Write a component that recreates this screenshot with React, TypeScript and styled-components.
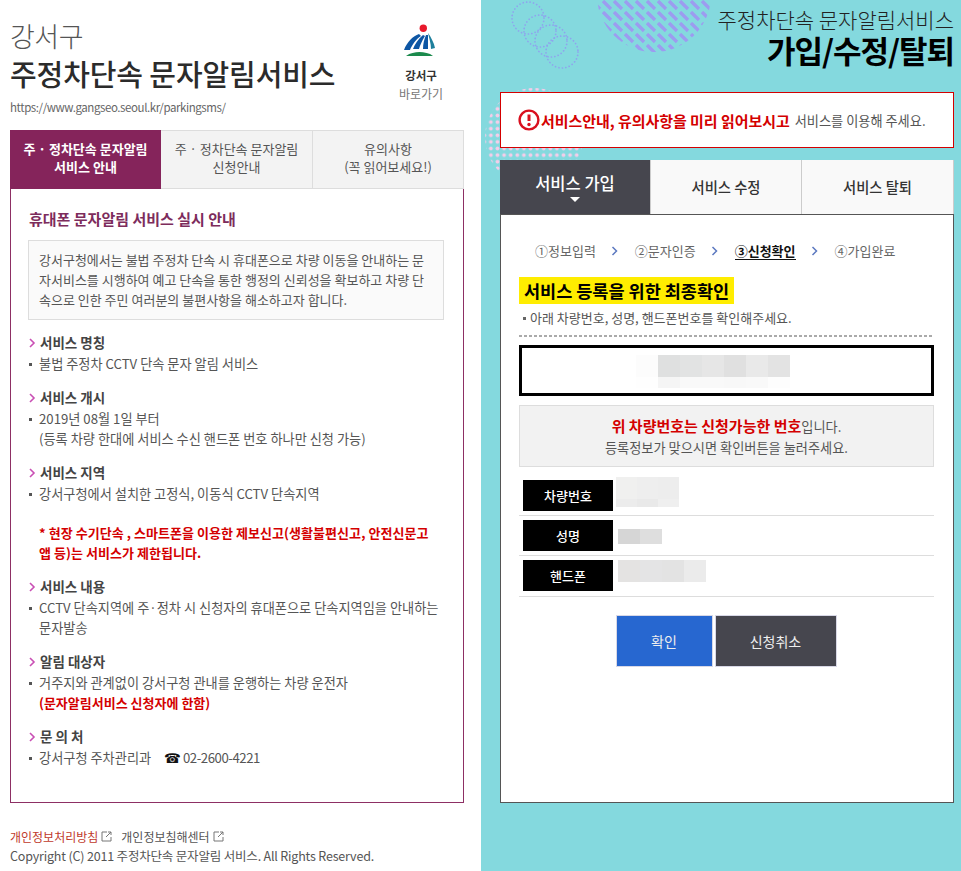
import React from 'react';
import styled, { createGlobalStyle } from 'styled-components';

const GlobalStyle = createGlobalStyle`
	html, body { margin: 0; padding: 0; background: #fff; }
	body { font-family: "Noto Sans CJK KR", "Noto Sans", sans-serif; color: #555; }
	* { box-sizing: border-box; }
`;

const Page = styled.div`
	display: grid;
	grid-template-columns: 481px 480px;
	width: 961px;
	height: 871px;
	overflow: hidden;
`;

/* left column */
const InfoColumn = styled.div`
	padding: 19px 17px 0 10px;
`;

const Header = styled.header`
	display: flex;
	justify-content: space-between;
	height: 111px;
`;

const TitleBlock = styled.div`
	display: flex;
	flex-direction: column;
`;

const District = styled.div`
	font-size: 27px;
	font-weight: 300;
	line-height: 34px;
	color: #555;
	letter-spacing: -0.5px;
`;

const MainTitle = styled.h1`
	margin: 2px 0 0;
	font-size: 29px;
	font-weight: 500;
	line-height: 36px;
	color: #2b2b2b;
	letter-spacing: -0.1px;
`;

const SiteUrl = styled.div`
	margin-top: 7px;
	font-size: 11.5px;
	line-height: 18px;
	color: #666;
	letter-spacing: -0.42px;
`;

const LogoBlock = styled.div`
	display: flex;
	flex-direction: column;
	align-items: center;
	width: 60px;
	margin: 1px 13px 0 0;
	font-size: 12px;
	line-height: 19px;
	color: #777;
`;

const LogoName = styled.strong`
	margin-top: 9px;
	line-height: 17px;
	color: #333;
	font-weight: 700;
	font-size: 11.5px;
`;

const InfoTabs = styled.div`
	display: grid;
	grid-template-columns: 151px 152px 151px;
	height: 59px;
`;

const InfoTab = styled.div<{ $active?: boolean }>`
	display: flex;
	flex-direction: column;
	align-items: center;
	justify-content: center;
	font-size: 13px;
	line-height: 18px;
	padding-bottom: 4px;
	font-weight: ${p => (p.$active ? 700 : 400)};
	color: ${p => (p.$active ? '#fff' : '#555')};
	background: ${p => (p.$active ? '#85245b' : '#f3f3f3')};
	border: 1px solid ${p => (p.$active ? '#85245b' : '#ddd')};
	border-left-width: ${p => (p.$active ? 1 : 0)}px;
`;

const InfoPanel = styled.div`
	height: 614px;
	padding: 19px 19px 0 17px;
	border: 1px solid #8d2f64;
	border-top: 0;
`;

const PanelTitle = styled.h2`
	margin: 0 0 0 1px;
	font-size: 15px;
	font-weight: 700;
	line-height: 22px;
	color: #7d2c5c;
`;

const IntroBox = styled.div`
	margin: 10px 0 12px;
	padding: 9px 10px 9px;
	height: 80px;
	font-size: 13px;
	line-height: 20px;
	color: #555;
	background: #fafafa;
	border: 1px solid #ddd;
`;

const Section = styled.section`
	margin-bottom: 13px;
`;

const SectionHead = styled.h3`
	display: flex;
	align-items: center;
	gap: 4px;
	margin: 0 0 1px;
	font-size: 13.5px;
	font-weight: 700;
	line-height: 21px;
	color: #444;
`;

const BodyText = styled.div`
	position: relative;
	padding-left: 11px;
	font-size: 13.2px;
	line-height: 20px;
	color: #555;
	&::before {
		content: '';
		position: absolute;
		left: 1px;
		top: 9px;
		width: 3px;
		height: 3px;
		background: #555;
	}
`;

const Warning = styled.div`
	margin: 19px 0 0 11px;
	font-size: 13px;
	line-height: 20px;
	font-weight: 700;
	color: #d40000;
	letter-spacing: 0.05px;
`;

const RedStrong = styled.strong`
	font-size: 13px;
	font-weight: 700;
	color: #d40000;
`;

const PhoneGlyph = styled.span`
	margin: 0 2px 0 10px;
	font-family: "DejaVu Sans", sans-serif;
	font-size: 13.5px;
	color: #111;
`;

const PhoneNumber = styled.span`
	letter-spacing: -0.45px;
`;

const Footer = styled.footer`
	margin-top: 24px;
	font-size: 12px;
	line-height: 19px;
	color: #555;
`;

const FooterLinks = styled.div`
	display: flex;
	align-items: center;
	gap: 3px;
`;

const PolicyLink = styled.span<{ $red?: boolean }>`
	color: ${p => (p.$red ? '#c0392b' : '#555')};
	margin-left: ${p => (p.$red ? 0 : 6)}px;
`;

const Copyright = styled.div`
	font-size: 12.5px;
	letter-spacing: -0.18px;
`;

/* right column */
const FormColumn = styled.div`
	position: relative;
	padding: 6px 7px 0 19px;
	background: #84d9de;
	overflow: hidden;
`;

const Decoration = styled.svg`
	position: absolute;
	left: 0;
	top: 0;
`;

const FormHeader = styled.header`
	position: relative;
	height: 86px;
	text-align: right;
`;

const FormSub = styled.div`
	font-size: 21px;
	font-weight: 300;
	line-height: 26px;
	color: #222;
`;

const FormTitle = styled.div`
	margin-top: 1px;
	font-size: 31px;
	font-weight: 700;
	line-height: 34px;
	color: #000;
	letter-spacing: -1px;
`;

const Notice = styled.div`
	position: relative;
	display: flex;
	align-items: center;
	gap: 1px;
	height: 56px;
	padding: 0 0 0 17px;
	background: #fff;
	border: 1px solid #d40000;
	font-size: 13.2px;
	color: #555;
`;

const NoticeStrong = styled.strong`
	margin-right: 4px;
	font-size: 15px;
	font-weight: 700;
	color: #d40000;
	letter-spacing: -0.05px;
`;

const FormTabs = styled.div`
	position: relative;
	display: grid;
	grid-template-columns: 151px 151px 152px;
	height: 54px;
	margin-top: 12px;
`;

const FormTab = styled.div<{ $active?: boolean }>`
	position: relative;
	display: flex;
	align-items: center;
	justify-content: center;
	font-size: ${p => (p.$active ? 16.5 : 14.3)}px;
	font-weight: 500;
	color: ${p => (p.$active ? '#fff' : '#333')};
	background: ${p => (p.$active ? '#46464e' : '#f9f9f9')};
	border-right: 1px solid #ccc;
	padding-bottom: ${p => (p.$active ? 8 : 1)}px;
	${p =>
		p.$active &&
		`&::after {
			content: '';
			position: absolute;
			left: 70px;
			bottom: 12px;
			border: 5px solid transparent;
			border-top-color: #fff;
			border-bottom-width: 0;
		}`}
`;

const FormPanel = styled.div`
	position: relative;
	height: 589px;
	padding: 27px 19px 0 18px;
	background: #fff;
	border: 1px solid #555;
`;

const Steps = styled.div`
	display: flex;
	align-items: center;
	height: 18px;
	padding-left: 16px;
	font-size: 13px;
	color: #666;
`;

const Step = styled.span<{ $current?: boolean }>`
	font-weight: ${p => (p.$current ? 700 : 400)};
	color: ${p => (p.$current ? '#111' : '#666')};
	line-height: 16px;
	border-bottom: ${p => (p.$current ? '1px solid #111' : '1px solid transparent')};
`;

const StepArrow = styled.svg`
	margin: 0 17px 0 15px;
`;

const Highlight = styled.h2`
	display: inline-block;
	margin: 17px 0 0;
	padding: 0 5px;
	height: 27px;
	font-size: 17.5px;
	font-weight: 700;
	line-height: 27px;
	color: #000;
	background: #ffed00;
`;

const Hint = styled.div`
	display: flex;
	align-items: flex-start;
	height: 33px;
	padding: 5px 0 0 4px;
	font-size: 13px;
	line-height: 18px;
	color: #555;
	background: repeating-linear-gradient(90deg, #aaa 0 3px, transparent 3px 5px) left bottom / 100% 2px no-repeat;
	&::before {
		content: '';
		flex: none;
		width: 3px;
		height: 3px;
		margin: 8px 4px 0 0;
		background: #666;
	}
`;

const PlateBox = styled.div`
	display: flex;
	justify-content: center;
	height: 51px;
	margin-top: 8px;
	padding: 7px 27px 0 0;
	background: #fff;
	border: 3px solid #000;
`;

const StatusBox = styled.div`
	height: 62px;
	margin-top: 9px;
	padding-top: 9px;
	text-align: center;
	font-size: 13.2px;
	line-height: 21px;
	color: #555;
	background: #f2f2f2;
	border: 1px solid #ddd;
`;

const StatusStrong = styled.strong`
	font-size: 15px;
	font-weight: 700;
	color: #d40000;
`;

const DataRows = styled.div`
	margin-top: 9px;
`;

const DataRow = styled.div<{ $h: number }>`
	display: flex;
	align-items: flex-start;
	height: ${p => p.$h}px;
	padding: 4px 0 0 4px;
	border-bottom: 1px solid #ddd;
`;

const RowLabel = styled.div`
	display: flex;
	align-items: center;
	justify-content: center;
	width: 90px;
	height: 31px;
	flex: none;
	background: #000;
	color: #fff;
	font-size: 13px;
	font-weight: 500;
`;

const Mosaic = styled.svg<{ $top: number; $left: number }>`
	display: block;
	margin: ${p => p.$top}px 0 0 ${p => p.$left}px;
	flex: none;
`;

const Buttons = styled.div`
	display: flex;
	justify-content: center;
	gap: 2px;
	margin-top: 18px;
	padding-right: 1px;
`;

const ActionButton = styled.button<{ $w: number; $bg: string }>`
	width: ${p => p.$w}px;
	height: 52px;
	padding: 0;
	font-family: inherit;
	font-size: 14px;
	color: #eee;
	background: ${p => p.$bg};
	border: 1px solid #d8d8e6;
`;

const Chevron = ({ color = '#c94fb4', size = 8 }: { color?: string; size?: number }) => (
	<svg width={size} height={size + 2} viewBox="0 0 8 10" fill="none">
		<path d="M2 1l4 4-4 4" stroke={color} strokeWidth="1.6" />
	</svg>
);

const ExternalIcon = () => (
	<svg width="11" height="11" viewBox="0 0 11 11" fill="none">
		<path d="M6 1H1v9h9V6" stroke="#777" strokeWidth="1" />
		<path d="M5 6l5-5M7 1h3v3" stroke="#777" strokeWidth="1" />
	</svg>
);

const Logo = () => (
	<svg width="44" height="38" viewBox="0 0 44 38">
		<circle cx="24.3" cy="8.3" r="3.7" fill="#e8192c" />
		<path d="M5 30C8 22 14 16 20 14l2 2C17 19 13 25 11 30z" fill="#0d56a4" />
		<path d="M14 29c2-5 5-10 10-14l2 1c-3 5-5 9-6 13z" fill="#0d56a4" />
		<path d="M24 29c0-5 1-9 3-14h2c0 5 0 10 0 14z" fill="#0d56a4" />
		<path d="M32 29c0-6-2-11-3-16 3 4 6 10 7 15z" fill="#1e7f9c" />
		<path d="M7 36c4-3 9-4 13.500-4s10 1 13.500 4z" fill="#1b8a4c" />
	</svg>
);

const AlertIcon = () => (
	<svg width="22" height="22" viewBox="0 0 22 22" fill="none">
		<circle cx="11" cy="11" r="9.4" stroke="#d9101f" strokeWidth="2.4" />
		<path d="M11 5.500v6.500" stroke="#d9101f" strokeWidth="3" />
		<circle cx="11" cy="15.500" r="1.700" fill="#d9101f" />
	</svg>
);

const StepChevron = () => (
	<StepArrow width="7" height="10" viewBox="0 0 7 10" fill="none">
		<path d="M1.500 1l4 4-4 4" stroke="#5b78c0" strokeWidth="1.500" />
	</StepArrow>
);

type MosaicProps = { rows: string[][]; cell: number; cellH: number[]; top?: number; left?: number };

// pixelated privacy blur: one row of greys per line
const MosaicCells = ({ rows, cell, cellH, top = 0, left = 0 }: MosaicProps) => {
	let y = 0;
	const width = Math.max(...rows.map(r => r.length)) * cell;
	const height = cellH.reduce((a, b) => a + b, 0);
	return (
		<Mosaic width={width} height={height} $top={top} $left={left}>
			{rows.map((row, i) => {
				const rowY = y;
				y += cellH[i];
				return row.map((fill, j) => (
					<rect key={`${i}-${j}`} x={j * cell} y={rowY} width={cell} height={cellH[i]} fill={fill} />
				));
			})}
		</Mosaic>
	);
};

const Backdrop = () => (
	<Decoration width="480" height="180" viewBox="0 0 480 180" fill="none">
		<defs>
			<pattern id="stripeTile" width="11" height="11" patternUnits="userSpaceOnUse">
				<path d="M1 1L9 9" stroke="#9c9cf0" strokeWidth="3.400" />
			</pattern>
			<pattern id="pinkDots" width="6.600" height="6.600" patternUnits="userSpaceOnUse">
				<circle cx="3.300" cy="3.300" r="1.900" fill="#f5cde9" />
			</pattern>
		</defs>
		<g stroke="#8fa3ee" strokeWidth="1.700" strokeDasharray="0.1 3.400" strokeLinecap="round">
			<circle cx="47" cy="18" r="16" />
			<circle cx="59" cy="31" r="16" />
			<circle cx="70" cy="41" r="16" />
			<circle cx="81" cy="52" r="16" />
		</g>
		<circle cx="173" cy="-5" r="57" fill="url(#stripeTile)" />
		<circle cx="53" cy="137" r="49" fill="url(#pinkDots)" />
	</Decoration>
);

export default function App() {
	return (
		<>
			<GlobalStyle />
			<Page>
				<InfoColumn>
					<Header>
						<TitleBlock>
							<District>강서구</District>
							<MainTitle>주정차단속 문자알림서비스</MainTitle>
							<SiteUrl>https://www.gangseo.seoul.kr/parkingsms/</SiteUrl>
						</TitleBlock>
						<LogoBlock>
							<Logo />
							<LogoName>강서구</LogoName>
							바로가기
						</LogoBlock>
					</Header>
					<InfoTabs>
						<InfoTab $active>
							<span>주 · 정차단속 문자알림</span>
							<span>서비스 안내</span>
						</InfoTab>
						<InfoTab>
							<span>주 · 정차단속 문자알림</span>
							<span>신청안내</span>
						</InfoTab>
						<InfoTab>
							<span>유의사항</span>
							<span>(꼭 읽어보세요!)</span>
						</InfoTab>
					</InfoTabs>
					<InfoPanel>
						<PanelTitle>휴대폰 문자알림 서비스 실시 안내</PanelTitle>
						<IntroBox>
							강서구청에서는 불법 주정차 단속 시 휴대폰으로 차량 이동을 안내하는 문자서비스를 시행하여 예고 단속을 통한 행정의 신뢰성을 확보하고 차량 단속으로 인한 주민 여러분의 불편사항을 해소하고자 합니다.
						</IntroBox>
						<Section>
							<SectionHead><Chevron />서비스 명칭</SectionHead>
							<BodyText>불법 주정차 CCTV 단속 문자 알림 서비스</BodyText>
						</Section>
						<Section>
							<SectionHead><Chevron />서비스 개시</SectionHead>
							<BodyText>
								2019년 08월 1일 부터<br />
								(등록 차량 한대에 서비스 수신 핸드폰 번호 하나만 신청 가능)
							</BodyText>
						</Section>
						<Section>
							<SectionHead><Chevron />서비스 지역</SectionHead>
							<BodyText>강서구청에서 설치한 고정식, 이동식 CCTV 단속지역</BodyText>
							<Warning>
								* 현장 수기단속 , 스마트폰을 이용한 제보신고(생활불편신고, 안전신문고<br />
								앱 등)는 서비스가 제한됩니다.
							</Warning>
						</Section>
						<Section>
							<SectionHead><Chevron />서비스 내용</SectionHead>
							<BodyText>
								CCTV 단속지역에 주·정차 시 신청자의 휴대폰으로 단속지역임을 안내하는 문자발송
							</BodyText>
						</Section>
						<Section>
							<SectionHead><Chevron />알림 대상자</SectionHead>
							<BodyText>
								거주지와 관계없이 강서구청 관내를 운행하는 차량 운전자<br />
								<RedStrong>(문자알림서비스 신청자에 한함)</RedStrong>
							</BodyText>
						</Section>
						<Section>
							<SectionHead><Chevron />문 의 처</SectionHead>
							<BodyText>
								강서구청 주차관리과 <PhoneGlyph>☎</PhoneGlyph><PhoneNumber>02-2600-4221</PhoneNumber>
							</BodyText>
						</Section>
					</InfoPanel>
					<Footer>
						<FooterLinks>
							<PolicyLink $red>개인정보처리방침</PolicyLink>
							<ExternalIcon />
							<PolicyLink>개인정보침해센터</PolicyLink>
							<ExternalIcon />
						</FooterLinks>
						<Copyright>Copyright (C) 2011 주정차단속 문자알림 서비스. All Rights Reserved.</Copyright>
					</Footer>
				</InfoColumn>
				<FormColumn>
					<Backdrop />
					<FormHeader>
						<FormSub>주정차단속 문자알림서비스</FormSub>
						<FormTitle>가입/수정/탈퇴</FormTitle>
					</FormHeader>
					<Notice>
						<AlertIcon />
						<NoticeStrong>서비스안내, 유의사항을 미리 읽어보시고</NoticeStrong>
						서비스를 이용해 주세요.
					</Notice>
					<FormTabs>
						<FormTab $active>서비스 가입</FormTab>
						<FormTab>서비스 수정</FormTab>
						<FormTab>서비스 탈퇴</FormTab>
					</FormTabs>
					<FormPanel>
						<Steps>
							<Step>①정보입력</Step>
							<StepChevron />
							<Step>②문자인증</Step>
							<StepChevron />
							<Step $current>③신청확인</Step>
							<StepChevron />
							<Step>④가입완료</Step>
						</Steps>
						<Highlight>서비스 등록을 위한 최종확인</Highlight>
						<Hint>아래 차량번호, 성명, 핸드폰번호를 확인해주세요.</Hint>
						<PlateBox>
							<MosaicCells
								cell={22}
								cellH={[22, 11]}
								rows={[
									['#fcfcfc', '#dfe0e0', '#e2e3e3', '#e6e6e6', '#e0e0e0', '#e9e9e9', '#e3e3e3'],
									['#fefefe', '#f5f5f5', '#f9f9f9', '#f9f9f9', '#f8f8f8', '#f9f9f9', '#fdfdfd'],
								]}
							/>
						</PlateBox>
						<StatusBox>
							<StatusStrong>위 차량번호는 신청가능한 번호</StatusStrong>입니다.<br />
							등록정보가 맞으시면 확인버튼을 눌러주세요.
						</StatusBox>
						<DataRows>
							<DataRow $h={40}>
								<RowLabel>차량번호</RowLabel>
								<MosaicCells
									cell={21}
									cellH={[22, 8]}
									top={-3}
									left={3}
									rows={[
										['#f0f0ef', '#eeeeee', '#ededed'],
										['#ececec', '#e9e9e9', '#efefef'],
									]}
								/>
							</DataRow>
							<DataRow $h={40}>
								<RowLabel>성명</RowLabel>
								<MosaicCells cell={22} cellH={[15]} top={9} left={5} rows={[['#d6d6d6', '#dedede']]} />
							</DataRow>
							<DataRow $h={41}>
								<RowLabel>핸드폰</RowLabel>
								<MosaicCells
									cell={22}
									cellH={[22]}
									left={5}
									rows={[['#e4e3e2', '#e4e4e5', '#e3e3e3', '#ebebeb']]}
								/>
							</DataRow>
						</DataRows>
						<Buttons>
							<ActionButton $w={97} $bg="#2767d0">확인</ActionButton>
							<ActionButton $w={122} $bg="#46464e">신청취소</ActionButton>
						</Buttons>
					</FormPanel>
				</FormColumn>
			</Page>
		</>
	);
}
